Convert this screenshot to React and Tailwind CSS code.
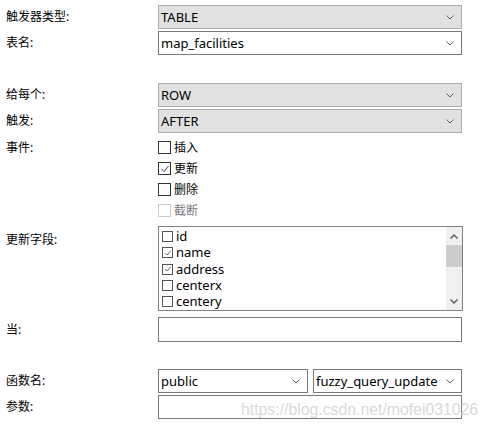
import React from "react";

const font = { fontFamily: '"Noto Sans", "Noto Sans CJK SC", sans-serif' };

function Chevron() {
  return (
    <svg width="8" height="5" viewBox="0 0 8 5" className="shrink-0">
      <polyline points="0.5,0.5 4,4 7.5,0.5" fill="none" stroke="#606060" strokeWidth="1" />
    </svg>
  );
}

function Select({ value, gray, className = "" }) {
  const cls = gray
    ? "bg-[#e1e1e1] border-[#adadad]"
    : "bg-white border-[#7a7a7a]";
  return (
    <div className={`h-[24px] border ${cls} flex items-center pl-[2px] pr-[7px] ${className}`}>
      <span className="flex-1 text-[13px] text-black leading-none">{value}</span>
      <Chevron />
    </div>
  );
}

function Input({ h = "h-[24px]" }) {
  return <div className={`${h} border border-[#7a7a7a] bg-white w-full`} />;
}

function Label({ children, className = "" }) {
  return <div className={`w-[158px] shrink-0 pl-[6px] text-[12px] text-black ${className}`}>{children}</div>;
}

function Check({ checked, disabled, size = 13 }) {
  const border = disabled ? "border-[#cccccc]" : size === 13 ? "border-[#333333]" : "border-[#555555]";
  return (
    <div className={`${size === 13 ? "w-[13px] h-[13px]" : "w-[11px] h-[11px]"} border ${border} bg-white flex items-center justify-center shrink-0`}>
      {checked && (
        <svg width={size - 3} height={size - 3} viewBox="0 0 10 10">
          <polyline points="1.5,5 4,7.5 8.5,2" fill="none" stroke="#444" strokeWidth="1" />
        </svg>
      )}
    </div>
  );
}

function EventRow({ label, checked, disabled }) {
  return (
    <div className="h-[21px] flex items-center gap-[3px]">
      <Check checked={checked} disabled={disabled} />
      <span className={`text-[12px] ${disabled ? "text-[#7a7a7a]" : "text-black"}`}>{label}</span>
    </div>
  );
}

function FieldItem({ name, checked }) {
  return (
    <div className="h-[17px] flex items-center gap-[3px] pl-[3px]">
      <Check checked={checked} size={11} />
      <span className="text-[13px] text-black leading-none">{name}</span>
    </div>
  );
}

export default function App() {
  const fields = [
    { name: "id" },
    { name: "name", checked: true },
    { name: "address", checked: true },
    { name: "centerx" },
    { name: "centery" },
  ];

  return (
    <div style={font} className="relative w-[487px] h-[428px] bg-white overflow-hidden pt-[5px]">
      <div className="flex items-center">
        <Label>触发器类型:</Label>
        <Select value="TABLE" gray className="w-[304px]" />
      </div>
      <div className="flex items-center mt-[2px]">
        <Label>表名:</Label>
        <Select value="map_facilities" className="w-[304px]" />
      </div>

      <div className="flex items-center mt-[28px]">
        <Label>给每个:</Label>
        <Select value="ROW" gray className="w-[304px]" />
      </div>
      <div className="flex items-center mt-[2px]">
        <Label>触发:</Label>
        <Select value="AFTER" gray className="w-[304px]" />
      </div>

      <div className="flex mt-[4px]">
        <Label className="h-[21px] flex items-center">事件:</Label>
        <div className="flex flex-col">
          <EventRow label="插入" />
          <EventRow label="更新" checked />
          <EventRow label="删除" />
          <EventRow label="截断" disabled />
        </div>
      </div>

      <div className="flex mt-[5px]">
        <Label className="pt-[5px]">更新字段:</Label>
        <div className="w-[305px] h-[85px] border border-[#828282] bg-white flex">
          <div className="flex-1 flex flex-col pt-[1px]">
            {fields.map((f) => (
              <FieldItem key={f.name} name={f.name} checked={f.checked} />
            ))}
          </div>
          <div className="w-[16px] bg-[#f0f0f0] flex flex-col items-center">
            <div className="h-[18px] flex items-center justify-center">
              <svg width="8" height="5" viewBox="0 0 8 5">
                <polyline points="0.5,4.5 4,1 7.5,4.5" fill="none" stroke="#606060" strokeWidth="1.5" />
              </svg>
            </div>
            <div className="w-[16px] h-[22px] bg-[#cdcdcd]" />
            <div className="flex-1" />
            <div className="h-[18px] flex items-center justify-center">
              <svg width="8" height="5" viewBox="0 0 8 5">
                <polyline points="0.5,0.5 4,4 7.5,0.5" fill="none" stroke="#606060" strokeWidth="1.5" />
              </svg>
            </div>
          </div>
        </div>
      </div>

      <div className="flex items-center mt-[6px]">
        <Label>当:</Label>
        <div className="w-[304px]">
          <Input h="h-[25px]" />
        </div>
      </div>

      <div className="flex items-center mt-[27px]">
        <Label>函数名:</Label>
        <div className="w-[304px] flex gap-[5px]">
          <Select value="public" className="w-[150px]" />
          <Select value="fuzzy_query_update" className="flex-1" />
        </div>
      </div>
      <div className="flex items-center mt-[2px]">
        <Label>参数:</Label>
        <div className="w-[304px]">
          <Input />
        </div>
      </div>

      <div
        className="absolute left-[241px] top-[402px] text-[15.8px] leading-none text-[#d9d9d9] whitespace-nowrap pointer-events-none"
        style={{ fontFamily: '"Liberation Sans", Arial, sans-serif' }}
      >
        https://blog.csdn.net/mofei031026
      </div>
    </div>
  );
}
